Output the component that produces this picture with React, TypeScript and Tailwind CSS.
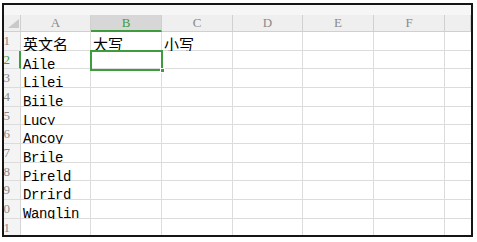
const COLS = ["A", "B", "C", "D", "E", "F", ""]

const NAMES = ["Aile", "Lilei", "Biile", "Lucy", "Ancoy", "Brile", "Pireld", "Drrird", "Wanglin", ""]

const mono = "font-['Liberation_Mono','DejaVu_Sans_Mono',monospace]"
const cjk = "font-['Noto_Sans_CJK_SC','Noto_Sans',sans-serif]"
const serif = "font-['Liberation_Serif','DejaVu_Serif',serif]"

function RowNum({ n, active }: { n: number; active?: boolean }) {
  return (
    <div
      className={
        "h-full overflow-hidden bg-[#f4f4f4] border-b border-[#dcdcdc] " +
        (active ? "border-r-2 border-r-[#3e9c3e]" : "border-r border-r-[#d6d6d6]")
      }
    >
      <div
        className={
          "-ml-[14px] w-[20px] text-right text-[13px] leading-[18px] " +
          serif +
          (active ? " text-[#3e9c3e]" : " text-[#8a8a8a]")
        }
      >
        {n}
      </div>
    </div>
  )
}

function Cell({ children, className = "" }: { children?: React.ReactNode; className?: string }) {
  return (
    <div className={"relative h-full border-r border-b border-[#dcdcdc] bg-white pl-[2px] " + className}>
      {children}
    </div>
  )
}

export default function App() {
  const rows = [
    ["英文名", "大写", "小写"],
    ...NAMES.map((n) => [n, "", ""]),
  ]

  return (
    <div className="w-[477px] h-[242px] bg-white">
      <div className="ml-[2px] mt-[3px] w-[471px] h-[234px] border-2 border-[#151515] overflow-hidden">
        <div className="h-[10px] bg-[#f6f6f6]" />
        <div className="grid grid-cols-[17px_70px_71px_71px_70px_71px_71px_1fr] grid-rows-[17px_repeat(11,18.67px)]">
          {/* header row */}
          <div className="bg-[#efefef] border-r border-b border-[#d0d0d0] flex items-end justify-center pb-[3px]">
            <svg width="11" height="9" viewBox="0 0 11 9" className="ml-[2px]">
              <polygon points="11,0 11,9 0,9" fill="#c9c9c9" />
            </svg>
          </div>
          {COLS.map((c) =>
            c === "B" ? (
              <div
                key={c}
                className={"bg-[#d7d7d7] border-r border-[#cfcfcf] border-b-2 border-b-[#3e9c3e] text-center text-[13px] leading-[16px] text-[#3e9c3e] " + serif}
              >
                {c}
              </div>
            ) : (
              <div
                key={c || "g"}
                className={"bg-[#efefef] border-r border-b border-[#d0d0d0] text-center text-[13px] leading-[16px] text-[#8a8a8a] " + serif}
              >
                {c}
              </div>
            )
          )}

          {rows.map((r, i) => (
            <Row key={i} idx={i + 1} cells={r} />
          ))}
        </div>
      </div>
    </div>
  )
}

function Row({ idx, cells }: { idx: number; cells: string[] }) {
  const first = cells[0]
  const isCjk = idx === 1
  return (
    <>
      <RowNum n={idx} active={idx === 2} />
      <Cell>
        <span
          className={
            (isCjk
              ? cjk + " text-[15px] leading-[18px]"
              : mono + " text-[14px] leading-[17px] tracking-[-0.4px]") + " text-black"
          }
        >
          {first}
        </span>
      </Cell>
      <Cell className={idx === 2 ? "z-10" : ""}>
        {isCjk && <span className={cjk + " text-[15px] leading-[18px] text-black"}>{cells[1]}</span>}
        {idx === 2 && (
          <div className="absolute -left-[1px] -top-[1px] w-[73px] h-[21px] border-2 border-[#3e9c3e]">
            <div className="absolute -right-[4px] -bottom-[4px] w-[5px] h-[5px] bg-[#3e9c3e] border border-white" />
          </div>
        )}
      </Cell>
      <Cell>
        {isCjk && <span className={cjk + " text-[15px] leading-[18px] text-black"}>{cells[2]}</span>}
      </Cell>
      <Cell />
      <Cell />
      <Cell />
      <Cell className="border-r-0" />
    </>
  )
}
